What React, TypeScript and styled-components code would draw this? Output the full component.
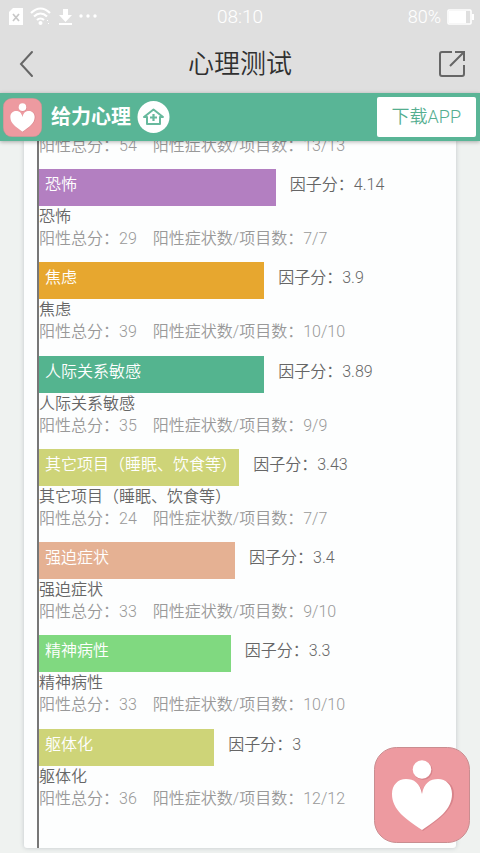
import React from "react";
import styled, { createGlobalStyle } from "styled-components";

const GlobalStyle = createGlobalStyle`
  *, *::before, *::after { box-sizing: border-box; }
  body {
    margin: 0;
    background: #eff2f0;
    font-family: Roboto, "Noto Sans CJK SC", sans-serif;
    font-weight: 350;
  }
  p, h1, h2, ul { margin: 0; padding: 0; font-weight: inherit; }
`;

const Page = styled.div`
  display: flex;
  flex-direction: column;
  height: 100vh;
  min-height: 850px;
  overflow: hidden;
`;

const StatusBar = styled.div`
  display: grid;
  grid-template-columns: 1fr auto 1fr;
  align-items: center;
  height: 34px;
  padding: 0 6px;
  background: #dfdfdf;
  color: #fff;
`;

const StatusIcons = styled.div`
  display: flex;
  align-items: center;
  padding-left: 2px;
`;

const Clock = styled.time`
  font-size: 19px;
  line-height: 34px;
`;

const Battery = styled.div`
  display: flex;
  align-items: center;
  justify-content: flex-end;
  gap: 6px;
  font-size: 18px;
  line-height: 32px;
`;

const TitleBar = styled.header`
  display: flex;
  align-items: center;
  justify-content: space-between;
  height: 59px;
  padding: 1px 14px 0;
  background: #dfdfdf;
`;

const IconButton = styled.button`
  display: flex;
  padding: 0;
  border: 0;
  background: none;
  color: #666;
  cursor: pointer;
`;

const Title = styled.h1`
  font-size: 26px;
  line-height: 40px;
  color: #303030;
`;

const Banner = styled.div`
  z-index: 1;
  flex: none;
  display: flex;
  align-items: center;
  height: 48px;
  padding: 0 4px 0 3px;
  background: #59b596;
  box-shadow: 0 1px 4px rgba(0, 0, 0, 0.3);
`;

const BrandName = styled.h2`
  margin: 0 6px 0 9px;
  font-size: 20px;
  font-weight: 700;
  line-height: 40px;
  color: #fff;
`;

const DownloadLink = styled.a`
  margin-left: auto;
  padding: 0 15px;
  border-radius: 2px;
  background: #fff;
  color: #55ae90;
  font-size: 18px;
  line-height: 40px;
  text-decoration: none;
`;

const Card = styled.main`
  flex: 1;
  min-height: 0;
  display: flex;
  margin: 0 24px 5px;
  padding-left: 13px;
  overflow: hidden;
  background: #fdfefe;
  border-radius: 0 0 3px 3px;
  box-shadow: 0 0 4px rgba(60, 70, 90, 0.25);
`;

const Chart = styled.ul`
  flex: 1;
  display: flex;
  flex-direction: column;
  list-style: none;
  border-left: 2px solid #777;
  margin-top: -6px;
  padding-bottom: 26px;
`;

const Entry = styled.li<{ $partial?: boolean }>`
  flex: ${(p) => (p.$partial ? "none" : "1 0 0")};
  padding-bottom: ${(p) => (p.$partial ? "12px" : "0")};
`;

const BarLine = styled.div`
  display: flex;
  gap: 14px;
  height: 37px;
  font-size: 16px;
  line-height: 32px;
`;

const Bar = styled.div<{ $color: string }>`
  padding-left: 6px;
  white-space: nowrap;
  color: #fff;
  background: ${(p) => p.$color};
`;

const Score = styled.span`
  color: #666;
  white-space: nowrap;
`;

const Name = styled.p`
  font-size: 16px;
  line-height: 22px;
  color: #666;
`;

const Detail = styled.p`
  display: flex;
  gap: 16px;
  font-size: 16px;
  line-height: 22px;
  color: #999;
`;

const FloatingButton = styled.button`
  position: fixed;
  right: 10px;
  bottom: 10px;
  z-index: 2;
  display: flex;
  padding: 0;
  border: 0;
  background: none;
  cursor: pointer;
`;

const factors = [
  { name: "恐怖", score: "4.14", total: 29, items: "7/7", color: "#b37fc1", width: 56.8 },
  { name: "焦虑", score: "3.9", total: 39, items: "10/10", color: "#e7a72f", width: 54 },
  { name: "人际关系敏感", score: "3.89", total: 35, items: "9/9", color: "#54b48f", width: 54 },
  { name: "其它项目（睡眠、饮食等）", score: "3.43", total: 24, items: "7/7", color: "#ced478", width: 48 },
  { name: "强迫症状", score: "3.4", total: 33, items: "9/10", color: "#e5b193", width: 47 },
  { name: "精神病性", score: "3.3", total: 33, items: "10/10", color: "#80d980", width: 46 },
  { name: "躯体化", score: "3", total: 36, items: "12/12", color: "#ced478", width: 42 },
];

function Logo({ size }: { size: number }) {
  return (
    <svg width={size} height={size} viewBox="0 0 96 96" aria-hidden="true">
      <rect x="0.5" y="0.5" width="95" height="95" rx="22" fill="#ed9aa0" stroke="#c98d90" />
      <g fill="#b9656c" opacity="0.4">
        <circle cx="49" cy="23.500" r="9.500" />
        <path d="M49 48C47 37 41 33 33 33c-8 0-14 6-14 15 0 15 15 25 30 36 15-11 31-21 31-37 0-9-6-14-14-14-9 0-15 5-17 15Z" />
      </g>
      <g fill="#fff">
        <circle cx="48" cy="22.500" r="9.300" />
        <path d="M48 47C46 36 40 32 32 32c-8 0-14 6-14 15 0 16 14 25 30 36 16-11 30-20 30-36 0-9-6-15-14-15-8 0-14 4-16 15Z" />
      </g>
    </svg>
  );
}

function StatusGlyphs() {
  return (
    <svg width="90" height="20" viewBox="0 0 90 20" fill="none" stroke="#fff" aria-hidden="true">
      <path d="M5 1h10v17H1V5Z" fill="#fff" stroke="none" />
      <path d="m5 7 6 7m0-7-6 7" stroke="#c8c8c8" strokeWidth="1.700" />
      <path d="M23 6c6-6 13-6 19 0M26 9.500c4-4 9-4 13 0M29 13c2-2 5-2 7 0" strokeWidth="2.200" />
      <circle cx="32.500" cy="16" r="2" fill="#fff" stroke="none" />
      <path d="M39 13h1v1h-1zM40 16h1v1h-1z" fill="#fff" stroke="none" />
      <path d="M55 2h5v6h4l-6.500 7L51 8h4ZM51 16h13v2H51Z" fill="#fff" stroke="none" />
      <g fill="#fff" stroke="none">
        <circle cx="73" cy="9" r="1.700" />
        <circle cx="80" cy="9" r="1.700" />
        <circle cx="87" cy="9" r="1.700" />
      </g>
    </svg>
  );
}

function HomeBadge() {
  return (
    <svg width="33" height="33" viewBox="0 0 33 33" fill="none" aria-hidden="true">
      <circle cx="16.500" cy="16" r="16" fill="#fff" />
      <path d="m7 16 9.500-7.500L26 16h-3v7H10v-7H7Z" stroke="#67b99d" strokeWidth="2" strokeLinejoin="round" />
      <path d="M16.500 13v7M13 16.500h7" stroke="#67b99d" strokeWidth="2.200" />
    </svg>
  );
}

function DetailLine({ total, items }: { total: number; items: string }) {
  return (
    <Detail>
      <span>阳性总分：{total}</span>
      <span>阳性症状数/项目数：{items}</span>
    </Detail>
  );
}

export default function App() {
  return (
    <>
      <GlobalStyle />
      <Page>
        <StatusBar>
          <StatusIcons>
            <StatusGlyphs />
          </StatusIcons>
          <Clock>08:10</Clock>
          <Battery>
            <span>80%</span>
            <svg width="27" height="16" viewBox="0 0 27 16" aria-hidden="true">
              <rect x="1" y="1" width="23" height="14" rx="1" fill="none" stroke="#fff" strokeWidth="1.600" />
              <path d="M2 2h17v12H2ZM25 5h2v6h-2Z" fill="#fff" />
            </svg>
          </Battery>
        </StatusBar>
        <TitleBar>
          <IconButton aria-label="返回">
            <svg width="28" height="28" viewBox="-4 0 28 28" fill="none" stroke="currentColor" strokeWidth="2" aria-hidden="true">
              <path d="M14 2 3 14l11 12" strokeLinecap="round" />
            </svg>
          </IconButton>
          <Title>心理测试</Title>
          <IconButton aria-label="分享">
            <svg width="28" height="28" viewBox="0 0 28 28" fill="none" stroke="currentColor" strokeWidth="2" aria-hidden="true">
              <path d="M14 2H4a2 2 0 0 0-2 2v20a2 2 0 0 0 2 2h20a2 2 0 0 0 2-2V15M12 16 25 3M17 2h9v9" />
            </svg>
          </IconButton>
        </TitleBar>
        <Banner>
          <Logo size={39} />
          <BrandName>给力心理</BrandName>
          <HomeBadge />
          <DownloadLink href="#download">下载APP</DownloadLink>
        </Banner>
        <Card>
          <Chart>
            <Entry $partial>
              <DetailLine total={54} items="13/13" />
            </Entry>
            {factors.map((f) => (
              <Entry key={f.name}>
                <BarLine>
                  <Bar $color={f.color} style={{ width: `${f.width}%` }}>
                    {f.name}
                  </Bar>
                  <Score>因子分：{f.score}</Score>
                </BarLine>
                <Name>{f.name}</Name>
                <DetailLine total={f.total} items={f.items} />
              </Entry>
            ))}
          </Chart>
        </Card>
      </Page>
      <FloatingButton aria-label="给力心理">
        <Logo size={96} />
      </FloatingButton>
    </>
  );
}
